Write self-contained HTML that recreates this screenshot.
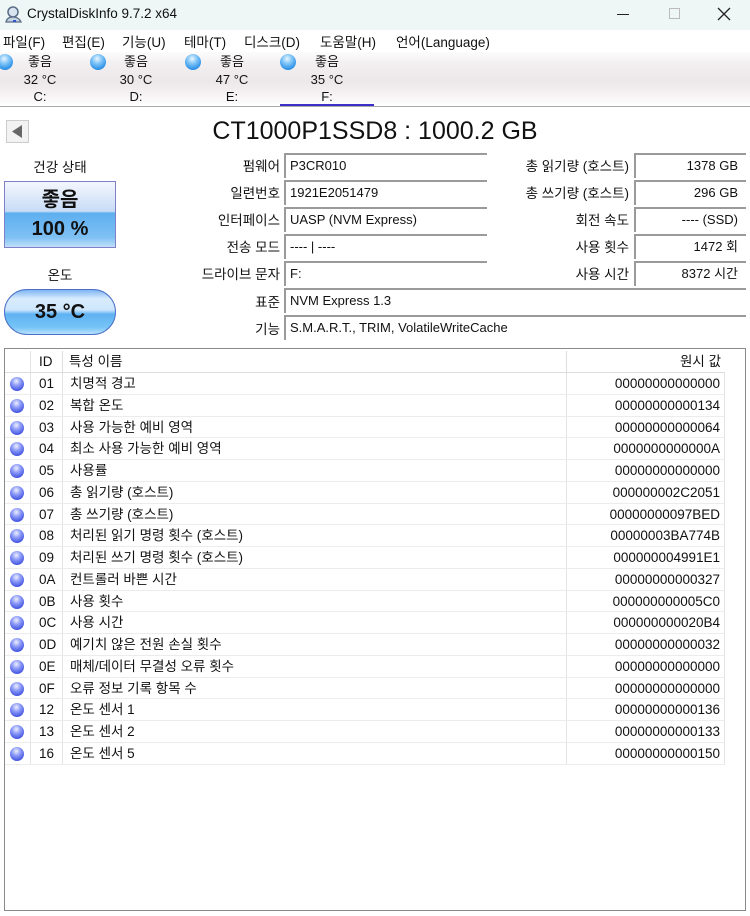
<!DOCTYPE html>
<html><head><meta charset="utf-8"><style>
*{margin:0;padding:0;box-sizing:border-box}
body{width:750px;height:916px;background:#fff;font-family:"Liberation Sans","Noto Sans CJK KR",sans-serif;font-size:13px;color:#111;position:relative;overflow:hidden}
.a{position:absolute}
.title{left:0;top:0;width:750px;height:30px;background:#eef6f6}
.menu{top:30px;left:0;width:750px;height:22px;background:#fff}
.menu span{position:absolute;top:4px;font-size:13.5px;line-height:18px}
.drv{top:52px;left:0;width:750px;height:55px;background:linear-gradient(#fdfcfd 0,#f3f0f1 20%,#ece7e8 55%,#f6f3f4 80%,#fff 100%);border-bottom:1px solid #a8a8a8}
.dot{width:16px;height:16px;border-radius:50%;background:radial-gradient(circle at 45% 30%,#e9f6ff 0,#7fc4f7 35%,#2a8fe6 75%,#1c6fc4 100%)}
.dt{text-align:center;width:60px;font-size:13px;line-height:17.5px}
.lbl{text-align:right;font-size:13.5px;line-height:18px}
.box{border-top:2px solid #9a9a9a;border-left:2px solid #9a9a9a;height:25px;padding:2px 0 0 4px;font-size:13px;line-height:18px;background:#fff}
.box.r{text-align:right;padding:2px 8px 0 0}
.list{left:4px;top:348px;width:742px;height:563px;border:1px solid #8a8a8a}
.row{position:absolute;left:0;width:720px;height:21.76px;border-bottom:1px solid #ececec;font-size:13.5px;line-height:21px}
.row .c{position:absolute;top:0;height:100%;border-right:1px solid #e4e4e4}
.bd{width:14px;height:14px;border-radius:50%;background:radial-gradient(circle at 45% 30%,#eef0ff 0,#8e9cf8 35%,#3d4fe0 80%,#2b37b8 100%);position:absolute;left:5px;top:4px}
</style></head><body>
<div class="a title">
 <svg class="a" style="left:4px;top:5px" width="20" height="20" viewBox="0 0 20 20"><circle cx="9" cy="7" r="5" fill="#d7e3ee" stroke="#5a6c85" stroke-width="1.5"/><path d="M2 17 Q3 12 9 12 Q15 12 17 17 Z" fill="#c5d3e2" stroke="#5a6c85" stroke-width="1.3"/><rect x="9" y="15" width="3" height="2" fill="#3355cc"/></svg>
 <span class="a" style="left:27px;top:6px;font-size:13.5px">CrystalDiskInfo 9.7.2 x64</span>
 <div class="a" style="left:617px;top:14px;width:12px;height:1px;background:#222"></div>
 <div class="a" style="left:669px;top:8px;width:11px;height:11px;border:1px solid #bbb"></div>
 <svg class="a" style="left:717px;top:7px" width="14" height="14"><path d="M1 1L13 13M13 1L1 13" stroke="#222" stroke-width="1.3"/></svg>
</div>
<div class="a menu">
 <span style="left:3px">파일(F)</span><span style="left:62px">편집(E)</span><span style="left:122px">기능(U)</span><span style="left:184px">테마(T)</span><span style="left:244px">디스크(D)</span><span style="left:320px">도움말(H)</span><span style="left:396px">언어(Language)</span>
</div>
<div class="a drv">
 <div class="a dot" style="left:-3px;top:2px"></div><div class="a dt" style="left:10px;top:1px">좋음<br>32 °C<br>C:</div>
 <div class="a dot" style="left:90px;top:2px"></div><div class="a dt" style="left:106px;top:1px">좋음<br>30 °C<br>D:</div>
 <div class="a dot" style="left:185px;top:2px"></div><div class="a dt" style="left:202px;top:1px">좋음<br>47 °C<br>E:</div>
 <div class="a dot" style="left:280px;top:2px"></div><div class="a dt" style="left:297px;top:1px">좋음<br>35 °C<br>F:</div>
 <div class="a" style="left:280px;top:52px;width:94px;height:2px;background:#3a2fc8"></div>
</div>
<div class="a" style="left:6px;top:120px;width:23px;height:23px;border:1px solid #ccc;background:#f2f2f2"><svg width="21" height="21"><path d="M5 10.5L15 4V17Z" fill="#666"/></svg></div>
<div class="a" style="left:0;top:117px;width:750px;text-align:center;font-size:25px">CT1000P1SSD8 : 1000.2 GB</div>

<div class="a" style="left:0;top:156px;width:120px;text-align:center;font-size:13.5px">건강 상태</div>
<div class="a" style="left:4px;top:181px;width:112px;height:67px;border:1px solid #8080c8;background:linear-gradient(#f4f6fd 0,#c8dcf6 45%,#5eaff0 48%,#7ec0f4 85%,#bfe0fa 100%);text-align:center;font-weight:bold;font-size:20px;line-height:29px;padding-top:4px">좋음<br>100 %</div>
<div class="a" style="left:0;top:264px;width:120px;text-align:center;font-size:13.5px">온도</div>
<div class="a" style="left:4px;top:289px;width:112px;height:46px;border:1px solid #4a70c8;border-radius:23px;background:linear-gradient(#7fb5f2 0,#d8ecfd 20%,#cfe6fc 45%,#5fb2f2 55%,#76c4f7 85%,#b9e0fb 100%);text-align:center;font-weight:bold;font-size:20px;line-height:44px">35 °C</div>

<div class="a lbl" style="left:150px;width:130px;top:158px">펌웨어</div>
<div class="a lbl" style="left:150px;width:130px;top:185px">일련번호</div>
<div class="a lbl" style="left:150px;width:130px;top:212px">인터페이스</div>
<div class="a lbl" style="left:150px;width:130px;top:239px">전송 모드</div>
<div class="a lbl" style="left:150px;width:130px;top:266px">드라이브 문자</div>
<div class="a lbl" style="left:150px;width:130px;top:294px">표준</div>
<div class="a lbl" style="left:150px;width:130px;top:321px">기능</div>
<div class="a box" style="left:284px;top:153px;width:203px">P3CR010</div>
<div class="a box" style="left:284px;top:180px;width:203px">1921E2051479</div>
<div class="a box" style="left:284px;top:207px;width:203px">UASP (NVM Express)</div>
<div class="a box" style="left:284px;top:234px;width:203px">---- | ----</div>
<div class="a box" style="left:284px;top:261px;width:203px">F:</div>
<div class="a box" style="left:284px;top:288px;width:462px">NVM Express 1.3</div>
<div class="a box" style="left:284px;top:315px;width:462px">S.M.A.R.T., TRIM, VolatileWriteCache</div>

<div class="a lbl" style="left:480px;width:149px;top:158px">총 읽기량 (호스트)</div>
<div class="a lbl" style="left:480px;width:149px;top:185px">총 쓰기량 (호스트)</div>
<div class="a lbl" style="left:480px;width:149px;top:212px">회전 속도</div>
<div class="a lbl" style="left:480px;width:149px;top:239px">사용 횟수</div>
<div class="a lbl" style="left:480px;width:149px;top:266px">사용 시간</div>
<div class="a box r" style="left:634px;top:153px;width:112px">1378 GB</div>
<div class="a box r" style="left:634px;top:180px;width:112px">296 GB</div>
<div class="a box r" style="left:634px;top:207px;width:112px">---- (SSD)</div>
<div class="a box r" style="left:634px;top:234px;width:112px">1472 회</div>
<div class="a box r" style="left:634px;top:261px;width:112px">8372 시간</div>

<div class="a list">
 <div class="row" style="top:2px;height:22px;border-bottom:1px solid #ddd">
  <div class="c" style="left:0;width:26px"></div><div class="c" style="left:26px;width:32px;border-right:1px solid #ddd"></div><div class="c" style="left:58px;width:504px;border-right:1px solid #ddd"></div>
  <span class="a" style="left:34px">ID</span><span class="a" style="left:64px">특성 이름</span><span class="a" style="right:4px">원시 값</span>
 </div>
</div>
<div id="rows"></div>
<script>
var d=[["01","치명적 경고","00000000000000"],["02","복합 온도","00000000000134"],["03","사용 가능한 예비 영역","00000000000064"],["04","최소 사용 가능한 예비 영역","0000000000000A"],["05","사용률","00000000000000"],["06","총 읽기량 (호스트)","000000002C2051"],["07","총 쓰기량 (호스트)","00000000097BED"],["08","처리된 읽기 명령 횟수 (호스트)","00000003BA774B"],["09","처리된 쓰기 명령 횟수 (호스트)","000000004991E1"],["0A","컨트롤러 바쁜 시간","00000000000327"],["0B","사용 횟수","000000000005C0"],["0C","사용 시간","000000000020B4"],["0D","예기치 않은 전원 손실 횟수","00000000000032"],["0E","매체/데이터 무결성 오류 횟수","00000000000000"],["0F","오류 정보 기록 항목 수","00000000000000"],["12","온도 센서 1","00000000000136"],["13","온도 센서 2","00000000000133"],["16","온도 센서 5","00000000000150"]];
var h="";
for(var i=0;i<d.length;i++){var t=(373+i*21.76).toFixed(2);
h+='<div class="row" style="left:5px;top:'+t+'px"><div class="c" style="left:0;width:26px"></div><div class="c" style="left:26px;width:32px"></div><div class="c" style="left:58px;width:504px"></div><div class="c" style="left:562px;width:158px"></div><div class="bd"></div><span class="a" style="left:34px">'+d[i][0]+'</span><span class="a" style="left:65px">'+d[i][1]+'</span><span class="a" style="right:5px">'+d[i][2]+'</span></div>';}
document.getElementById("rows").innerHTML=h;
</script>
</body></html>
